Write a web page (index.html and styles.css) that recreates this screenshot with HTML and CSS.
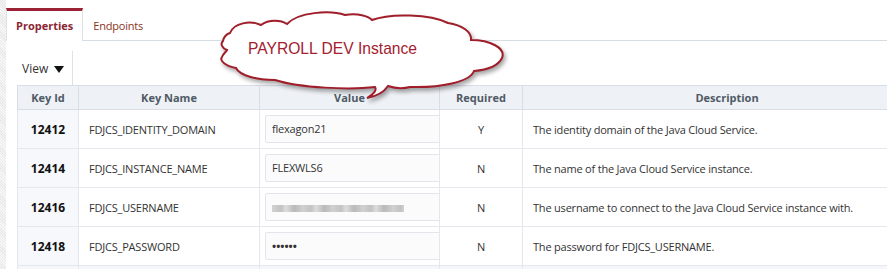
FILE: index.html
```html
<!DOCTYPE html>
<html lang="en">
<head>
    <meta charset="UTF-8">
    <title>Instance Properties</title>
    <link rel="stylesheet" href="styles.css">
</head>
<body>

    <!-- panel -->
    <div class="panel">
        <div class="tabs">
            <div class="tab active">Properties</div>
            <div class="tab">Endpoints</div>
        </div>

        <div class="content">
            <div class="toolbar">
                <div class="view-menu">View <span class="caret"></span></div>
            </div>

            <table class="props">
                <thead>
                    <tr>
                        <th class="col-id">Key Id</th>
                        <th class="col-name">Key Name</th>
                        <th class="col-value">Value</th>
                        <th class="col-req">Required</th>
                        <th class="col-desc">Description</th>
                    </tr>
                </thead>
                <tbody>
                    <tr>
                        <td class="key-id">12412</td>
                        <td>FDJCS_IDENTITY_DOMAIN</td>
                        <td class="value"><div class="field">flexagon21</div></td>
                        <td class="req">Y</td>
                        <td>The identity domain of the Java Cloud Service.</td>
                    </tr>
                    <tr>
                        <td class="key-id">12414</td>
                        <td>FDJCS_INSTANCE_NAME</td>
                        <td class="value"><div class="field">FLEXWLS6</div></td>
                        <td class="req">N</td>
                        <td>The name of the Java Cloud Service instance.</td>
                    </tr>
                    <tr>
                        <td class="key-id">12416</td>
                        <td>FDJCS_USERNAME</td>
                        <td class="value"><div class="field"><span class="blurred"></span></div></td>
                        <td class="req">N</td>
                        <td>The username to connect to the Java Cloud Service instance with.</td>
                    </tr>
                    <tr>
                        <td class="key-id">12418</td>
                        <td>FDJCS_PASSWORD</td>
                        <td class="value"><div class="field dots">&#8226;&#8226;&#8226;&#8226;&#8226;&#8226;</div></td>
                        <td class="req">N</td>
                        <td>The password for FDJCS_USERNAME.</td>
                    </tr>
                    <tr class="filler">
                        <td></td><td></td><td></td><td></td><td></td>
                    </tr>
                </tbody>
            </table>
        </div>
    </div>

    <!-- callout -->
    <div class="callout">
        <svg width="300" height="100" viewBox="215 5 300 100">
            <path class="cloud" d="M 230 33
                C 234 23, 250 20, 261 25
                C 269 19, 281 20, 287 24
                C 298 12, 330 10, 345 15
                C 358 13, 368 16, 372 20
                C 390 13, 430 14, 448 23
                C 462 25, 472 32, 471 40
                C 490 40, 506 48, 502 58
                C 498 66, 486 70, 474 71
                C 470 82, 440 88, 410 87
                C 402 89, 394 88, 388 86
                C 384 92, 378 96, 367 98
                C 374 94, 377 90, 375 87
                C 350 90, 300 88, 275 80
                C 258 80, 240 76, 236 68
                C 226 66, 219 61, 222 57
                C 223 54, 226 52, 227 50
                C 222 48, 220 44, 223 41
                C 224 36, 227 34, 230 33 Z"/>
            <text class="callout-text" x="248" y="54" textLength="169" lengthAdjust="spacingAndGlyphs">PAYROLL DEV Instance</text>
        </svg>
    </div>

</body>
</html>
```

FILE: styles.css
```css
/* base */
body {
    margin: 0;
    padding: 0;
    font-family: 'Open Sans', 'Liberation Sans', sans-serif;
    font-size: 11px;
    color: #333;
    overflow: hidden;
    background: repeating-linear-gradient(45deg, #f7f7f7 0, #f7f7f7 1px, #e9e9e9 1px, #e9e9e9 2px);
}

/* panel */
.panel {
    margin-left: 6px;
    min-height: 269px;
    background-color: #ffffff;
    overflow: hidden;
}

.tabs {
    display: flex;
    padding-top: 8px;
    border-bottom: 1px solid #d5dce4;
    height: 32px;
}

.tab {
    padding: 0 10px;
    line-height: 29px;
    margin-top: 3px;
    color: #8a3324;
    letter-spacing: -0.2px;
}

.tab.active {
    margin-top: 0;
    padding: 0 9px;
    border-top: 3px solid #9b2335;
    border-left: 1px solid #dde2e8;
    border-right: 1px solid #dde2e8;
    margin-bottom: -1px;
    background-color: #ffffff;
    color: #8b2635;
    font-weight: bold;
    letter-spacing: 0;
}

.content {
    padding-left: 11px;
    overflow: hidden;
}

/* toolbar */
.toolbar {
    display: flex;
    padding-top: 10px;
}

.view-menu {
    display: flex;
    align-items: center;
    height: 34px;
    padding: 0 8px 0 5px;
    border-right: 1px solid #dde2e8;
    font-size: 12px;
    color: #333;
}

.caret {
    display: inline-block;
    width: 0;
    height: 0;
    margin-left: 6px;
    margin-top: 2px;
    border-left: 5px solid transparent;
    border-right: 5px solid transparent;
    border-top: 7px solid #111;
}

/* table */
.props {
    border-collapse: collapse;
    table-layout: fixed;
    width: 915px;
}

.props th {
    background-color: #eef1f5;
    color: #4f5a66;
    font-weight: bold;
    height: 23px;
    padding: 0;
    border: 1px solid #d8dee6;
    text-align: center;
}

.props td {
    height: 38px;
    padding: 0 0 0 10px;
    border: 1px solid #e4e8ed;
    letter-spacing: -0.2px;
    white-space: nowrap;
    overflow: hidden;
}

.col-id { width: 60px; }
.col-name { width: 180px; }
.col-value { width: 179px; }
.col-req { width: 82px; }

.props td.key-id {
    padding: 0;
    text-align: center;
    font-weight: bold;
    font-size: 12px;
    color: #111;
    background-color: #f6f8fb;
    letter-spacing: 0;
}

.props td.req {
    padding: 0;
    text-align: center;
}

.props td.value {
    padding-left: 5px;
}

.field {
    width: 200px;
    height: 26px;
    line-height: 26px;
    padding-left: 6px;
    background-color: #fbfbfc;
    border: 1px solid #e2e6ea;
    border-radius: 2px;
}

.dots {
    font-weight: bold;
    letter-spacing: 0;
}

.blurred {
    display: inline-block;
    vertical-align: middle;
    width: 132px;
    height: 7px;
    background: repeating-linear-gradient(90deg, #c8c8c8 0, #b5b5b5 9px, #d6d6d6 14px, #aaaaaa 22px, #c2c2c2 30px);
    filter: blur(0.6px);
    opacity: 0.8;
}

.props tr.filler td {
    height: 10px;
    background-color: #f4f6f9;
}

/* callout */
.callout {
    position: absolute;
    left: 215px;
    top: 5px;
}

.callout svg {
    display: block;
    overflow: visible;
}

.cloud {
    fill: #ffffff;
    stroke: #a01d2a;
    stroke-width: 2;
    filter: drop-shadow(2px 3px 2px rgba(0, 0, 0, 0.35));
}

.callout-text {
    font-family: 'Liberation Sans', Arial, sans-serif;
    font-size: 17px;
    fill: #a3212f;
}
```
